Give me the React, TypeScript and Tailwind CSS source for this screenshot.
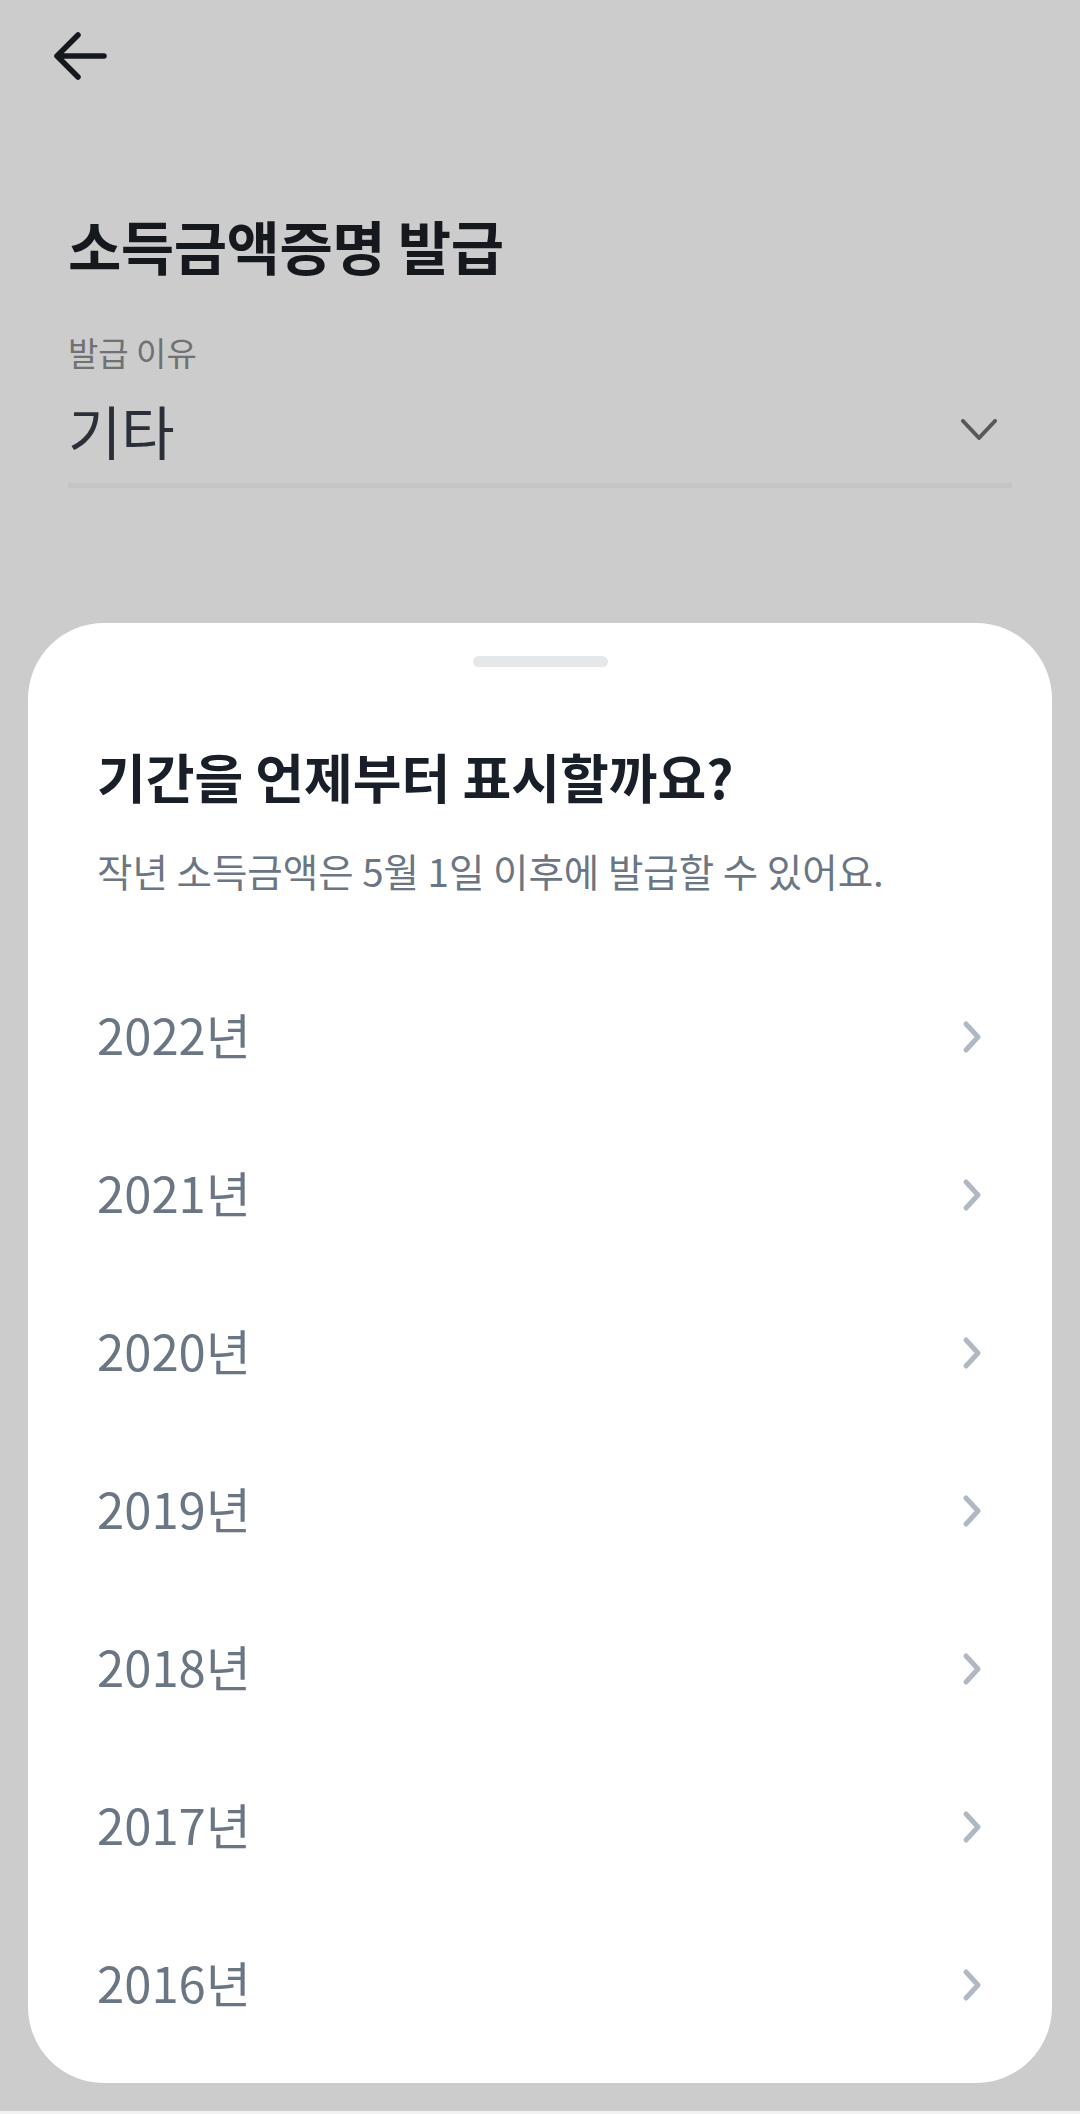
import React from "react";

const years = ["2022년", "2021년", "2020년", "2019년", "2018년", "2017년", "2016년"];

export default function App() {
  return (
    <div
      className="w-[1080px] h-[2114px] bg-[#cccccc] flex flex-col overflow-hidden"
      style={{ fontFamily: '"Noto Sans CJK KR", "Noto Sans", sans-serif' }}
    >
      <div className="h-[112px] pl-[50px] pt-[26px]">
        <svg width="60" height="60" viewBox="0 0 60 60" fill="none">
          <path
            d="M54 30H7M28 9L7 30L28 51"
            stroke="#15181d"
            strokeWidth="5.5"
            strokeLinecap="round"
            strokeLinejoin="round"
          />
        </svg>
      </div>
      <div className="px-[68px]">
        <h1 className="mt-[102px] text-[58px] leading-[62px] font-bold text-[#15181d] tracking-[-0.5px]">
          소득금액증명 발급
        </h1>
        <div className="mt-[57px] text-[33px] leading-[38px] text-[#6f7173]">발급 이유</div>
        <div className="mt-[27px] flex items-center justify-between pr-[15px]">
          <span className="text-[58px] leading-[64px] text-[#2b3038]">기타</span>
          <svg width="36" height="22" viewBox="0 0 36 22" fill="none">
            <path d="M2 2L18 19L34 2" stroke="#56585c" strokeWidth="4" strokeLinecap="round" strokeLinejoin="round" />
          </svg>
        </div>
        <div className="mt-[21px] h-[5px] bg-[#c3c5c8]" />
      </div>

      <div className="mt-[135px] mx-[28px] h-[1460px] bg-white rounded-[76px] px-[69px] flex flex-col">
        <div className="mt-[33px] mx-auto h-[11px] w-[135px] rounded-full bg-[#e5e8eb]" />
        <h2 className="mt-[81px] text-[53px] leading-[56px] font-bold text-[#191f28] whitespace-nowrap">
          기간을 언제부터 표시할까요?
        </h2>
        <p className="mt-[44px] text-[38.5px] leading-[44px] text-[#6b7684] whitespace-nowrap">
          작년 소득금액은 5월 1일 이후에 발급할 수 있어요.
        </p>
        <div className="mt-[63px] flex flex-col">
          {years.map((y) => (
            <div key={y} className="h-[158px] flex items-center justify-between">
              <span className="text-[49px] leading-[56px] text-[#6b7684]">{y}</span>
              <svg className="mt-[6px]" width="22" height="36" viewBox="0 0 22 36" fill="none">
                <path d="M5 5L17 18L5 31" stroke="#b0b8c1" strokeWidth="5" strokeLinecap="round" strokeLinejoin="round" />
              </svg>
            </div>
          ))}
        </div>
      </div>
      <div className="flex-1" />
      <div className="h-[3px] bg-[#f2f2f2]" />
    </div>
  );
}
